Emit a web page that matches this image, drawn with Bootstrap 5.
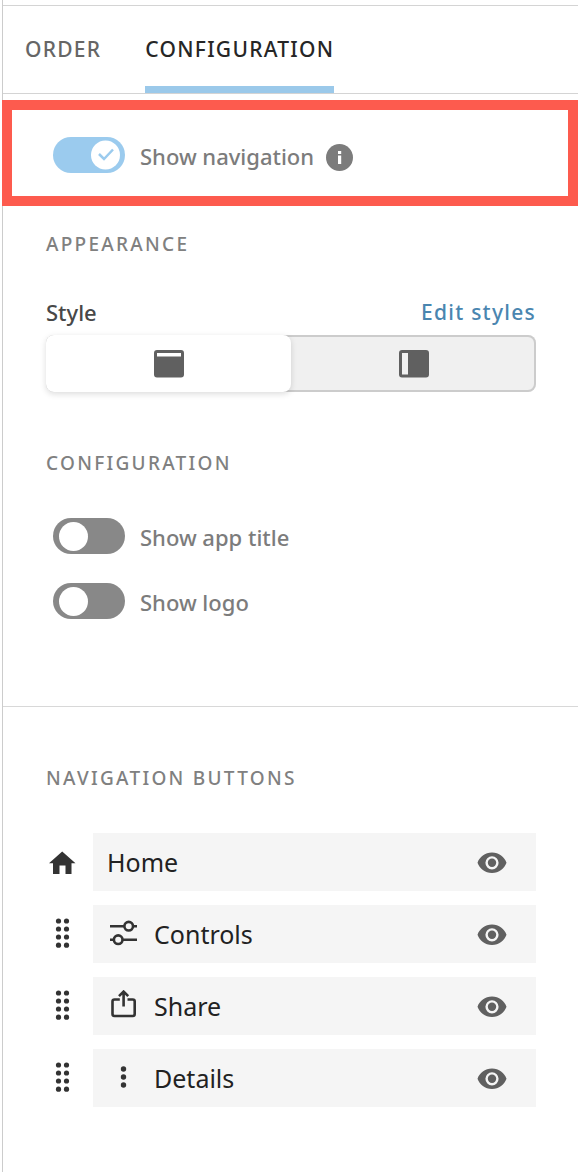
<!DOCTYPE html>
<html lang="en">
<head>
<meta charset="utf-8">
<meta name="viewport" content="width=device-width, initial-scale=1">
<title>Navigation configuration</title>
<link href="https://cdn.jsdelivr.net/npm/bootstrap@5.3.0/dist/css/bootstrap.min.css" rel="stylesheet">
<style>
  body { font-family: "Noto Sans", "Open Sans", sans-serif; background: #fff; color: #222; }
  .panel { margin-left: 2px; border-left: 1px solid #ccc; min-height: 100vh; padding-top: 5px; }
  .panel-tabs { border-top: 1px solid #d4d4d4; border-bottom: 1px solid #d4d4d4; padding-left: 22px; gap: 44px; }
  .panel-tabs .nav-link { padding: 28px 0 22px; border-radius: 0; border-bottom: 7px solid transparent; font-size: 21px; line-height: 30px; font-weight: 500; letter-spacing: .06em; color: #666; }
  .panel-tabs .nav-link.active { color: #262626; border-bottom-color: #9bc9ea; }
  .highlight { border: 10px solid #fd5b4e; margin: 6px 0 0 -1px; padding: 25px 32px 21px 41px; }
  .inset { padding-left: 43px; padding-right: 42px; }
  .section-title { font-size: 19px; line-height: 24px; font-weight: 500; letter-spacing: .12em; color: #808080; margin: 0; }
  .appearance-title { margin-top: 26px; }
  .config-title { margin-top: 59px; margin-bottom: 41px; }
  .buttons-title { margin-top: 59px; margin-bottom: 43px; }
  .toggle-row { height: 40px; gap: 15px; padding-left: 7px; }
  .toggle-next { margin-top: 25px; }
  .highlight .toggle-row { padding-left: 0; }
  .toggle-text { gap: 12px; }
  .toggle-row label { font-size: 22px; line-height: 30px; font-weight: 500; color: #7c7c7c; padding-top: 1px; }
  .form-switch .form-check-input { width: 72px; height: 36px; margin: 0; float: none; border: 0; border-radius: 18px; background-color: #888; background-size: 72px 36px; background-position: 0 0; transition: none;
    background-image: url("data:image/svg+xml,%3Csvg xmlns='http://www.w3.org/2000/svg' viewBox='0 0 72 36'%3E%3Ccircle cx='20.500' cy='18.500' r='14.500' fill='white'/%3E%3C/svg%3E"); }
  .form-switch .form-check-input:checked { background-color: #9bcbee; background-position: 0 0;
    background-image: url("data:image/svg+xml,%3Csvg xmlns='http://www.w3.org/2000/svg' viewBox='0 0 72 36'%3E%3Ccircle cx='52.500' cy='18' r='14.500' fill='white'/%3E%3Cpath d='M46 17l5 5 9-9.500' fill='none' stroke='%239bcbee' stroke-width='2.500'/%3E%3C/svg%3E"); }
  .style-head { margin-top: 40px; margin-bottom: 7px; }
  .style-label { font-size: 22px; line-height: 32px; font-weight: 500; color: #484848; }
  .style-link { font-size: 21px; line-height: 32px; font-weight: 500; letter-spacing: .06em; color: #4a86b0; text-decoration: none; }
  .segmented { height: 57px; background: #f0f0f0; border-radius: 8px; box-shadow: inset 0 0 0 2px #ccc; }
  .segmented .btn { flex: 1 1 0; border: 0; border-radius: 8px; padding: 0; display: flex; align-items: center; justify-content: center; }
  .segmented .btn-check:checked + .btn { background: #fff; box-shadow: 0 2px 6px rgba(0,0,0,.14); }
  .panel-rule { border: 0; border-top: 1px solid #d8d8d8; opacity: 1; margin: 85px 0 0; }
  .nav-items { gap: 14px; }
  .handle { width: 47px; padding: 0; border: 0; background: none; text-align: left; flex: none; }
  .handle svg, .item-box svg { display: block; }
  .item-box { height: 58px; background: #f5f5f5; padding: 0 29px 0 14px; font-size: 25px; line-height: 36px; }
  .item-icon { width: 32px; margin-right: 15px; }
  .eye-btn { border: 0; padding: 0; background: none; color: #606060; }
</style>
</head>
<body>
<svg class="d-none" aria-hidden="true">
  <symbol id="grip" viewBox="0 0 32 32"><g fill="#333"><circle cx="12.500" cy="3" r="2.600"/><circle cx="20.500" cy="3" r="2.600"/><circle cx="12.500" cy="11" r="2.600"/><circle cx="20.500" cy="11" r="2.600"/><circle cx="12.500" cy="19" r="2.600"/><circle cx="20.500" cy="19" r="2.600"/><circle cx="12.500" cy="27.200" r="2.600"/><circle cx="20.500" cy="27.200" r="2.600"/></g></symbol>
  <symbol id="eye" viewBox="0 0 30 22"><path fill="currentColor" fill-rule="evenodd" d="M15 1.500C8 1.500 2.500 6 .500 11.700 2.500 17.500 8 22 15 22s12.500-4.500 14.500-10.300C27.500 6 22 1.500 15 1.500zm0 3.700a6.600 6.600 0 1 1 0 13.200 6.600 6.600 0 0 1 0-13.200z"/><circle cx="15" cy="11.800" r="4.200" fill="currentColor"/></symbol>
</svg>
<main class="panel">
  <nav class="nav panel-tabs">
    <a class="nav-link" href="#order">ORDER</a>
    <a class="nav-link active" aria-current="page" href="#configuration">CONFIGURATION</a>
  </nav>

  <div class="highlight">
    <div class="form-switch toggle-row d-flex align-items-center">
      <input class="form-check-input" type="checkbox" role="switch" id="show-navigation" checked>
      <div class="toggle-text d-flex align-items-center">
        <label for="show-navigation">Show navigation</label>
        <svg width="27" height="27" viewBox="0 0 27 27" class="mt-1" aria-hidden="true"><circle cx="13.500" cy="13.500" r="13.500" fill="#7c7c7c"/><path fill="#fff" d="M12 7h3.200v3H12zM12 11.500h3.200V20H12z"/></svg>
      </div>
    </div>
  </div>

  <section class="inset">
    <h2 class="section-title appearance-title">APPEARANCE</h2>
    <div class="style-head d-flex justify-content-between">
      <span class="style-label" id="style-label">Style</span>
      <a class="style-link" href="#styles">Edit styles</a>
    </div>
    <div class="segmented d-flex" role="group" aria-labelledby="style-label">
      <input class="btn-check" type="radio" name="nav-style" id="style-top" checked>
      <label class="btn" for="style-top" aria-label="Top bar"><svg width="30" height="28" viewBox="0 0 30 28"><path fill="#606060" fill-rule="evenodd" d="M3 0h24a3 3 0 0 1 3 3v21.500a3 3 0 0 1-3 3H3a3 3 0 0 1-3-3V3a3 3 0 0 1 3-3zm0 3v3.500h24V3z"/></svg></label>
      <input class="btn-check" type="radio" name="nav-style" id="style-side">
      <label class="btn" for="style-side" aria-label="Side bar"><svg width="30" height="28" viewBox="0 0 30 28"><path fill="#606060" fill-rule="evenodd" d="M3 0h24a3 3 0 0 1 3 3v21.500a3 3 0 0 1-3 3H3a3 3 0 0 1-3-3V3a3 3 0 0 1 3-3zm0 3v21.500h6V3z"/></svg></label>
    </div>

    <h2 class="section-title config-title">CONFIGURATION</h2>
    <div class="form-switch toggle-row d-flex align-items-center">
      <input class="form-check-input" type="checkbox" role="switch" id="show-title">
      <label for="show-title">Show app title</label>
    </div>
    <div class="form-switch toggle-row toggle-next d-flex align-items-center">
      <input class="form-check-input" type="checkbox" role="switch" id="show-logo">
      <label for="show-logo">Show logo</label>
    </div>
  </section>

  <hr class="panel-rule">

  <section class="inset pb-5">
    <h2 class="section-title buttons-title">NAVIGATION BUTTONS</h2>
    <div class="nav-items d-flex flex-column">
      <div class="d-flex align-items-center">
        <span class="handle"><svg width="32" height="32" viewBox="0 0 32 32" aria-hidden="true"><path fill="#333" d="M16.200 5.500L29.500 17.300h-4V28h-6v-8.500h-6V28H7V17.300H3z"/></svg></span>
        <div class="item-box d-flex align-items-center flex-grow-1"><span>Home</span>
          <button class="eye-btn ms-auto" type="button" aria-label="Hide Home"><svg width="30" height="22"><use href="#eye"/></svg></button></div>
      </div>
      <div class="d-flex align-items-center">
        <button class="handle" type="button" aria-label="Move Controls"><svg width="32" height="32"><use href="#grip"/></svg></button>
        <div class="item-box d-flex align-items-center flex-grow-1">
          <svg class="item-icon" width="32" height="32" viewBox="0 0 32 32" fill="none" stroke="#333" stroke-width="2.600"><path d="M3 8.200h14.500M26 8.200h4M3 21.700h4M15.500 21.700H30"/><circle cx="21.700" cy="8.200" r="4.300"/><circle cx="11.200" cy="21.700" r="4.300"/></svg>
          <span>Controls</span>
          <button class="eye-btn ms-auto" type="button" aria-label="Hide Controls"><svg width="30" height="22"><use href="#eye"/></svg></button></div>
      </div>
      <div class="d-flex align-items-center">
        <button class="handle" type="button" aria-label="Move Share"><svg width="32" height="32"><use href="#grip"/></svg></button>
        <div class="item-box d-flex align-items-center flex-grow-1">
          <svg class="item-icon" width="32" height="32" viewBox="0 0 32 32" fill="none" stroke="#333" stroke-width="2.600"><path d="M12.800 9.500H7.500a2 2 0 0 0-2 2v12.500a2 2 0 0 0 2 2h18.200a2 2 0 0 0 2-2V11.500a2 2 0 0 0-2-2h-5.200M16.600 16.500V1.500M12 6.200l4.600-4.600 4.600 4.600"/></svg>
          <span>Share</span>
          <button class="eye-btn ms-auto" type="button" aria-label="Hide Share"><svg width="30" height="22"><use href="#eye"/></svg></button></div>
      </div>
      <div class="d-flex align-items-center">
        <button class="handle" type="button" aria-label="Move Details"><svg width="32" height="32"><use href="#grip"/></svg></button>
        <div class="item-box d-flex align-items-center flex-grow-1">
          <svg class="item-icon" width="32" height="32" viewBox="0 0 32 32" fill="#333"><circle cx="16.500" cy="7" r="2.700"/><circle cx="16.500" cy="15" r="2.700"/><circle cx="16.500" cy="23" r="2.700"/></svg>
          <span>Details</span>
          <button class="eye-btn ms-auto" type="button" aria-label="Hide Details"><svg width="30" height="22"><use href="#eye"/></svg></button></div>
      </div>
    </div>
  </section>
</main>
<script src="https://cdn.jsdelivr.net/npm/bootstrap@5.3.0/dist/js/bootstrap.bundle.min.js"></script>
</body>
</html>
